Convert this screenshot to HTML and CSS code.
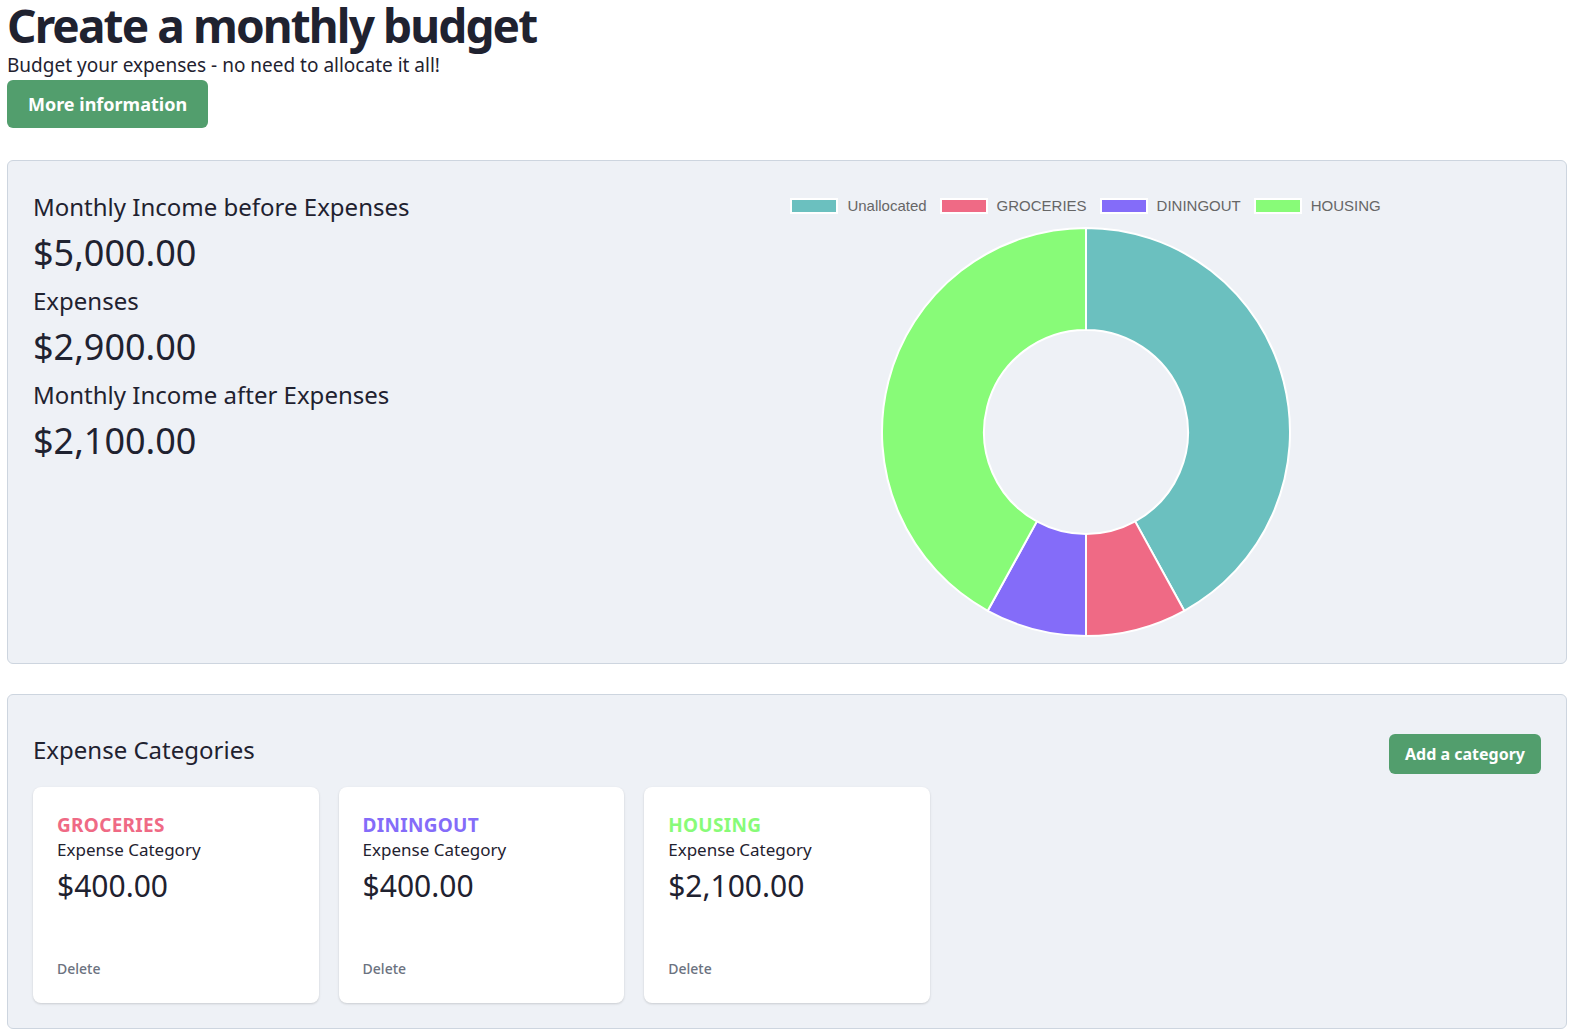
FILE: index.html
```html
<!DOCTYPE html>
<html lang="en">
<head>
<meta charset="utf-8">
<title>Create a monthly budget</title>
<link rel="stylesheet" href="styles.css">
</head>
<body>
<div class="page">
  <header class="intro">
    <h1 class="title">Create a monthly budget</h1>
    <p class="subtitle">Budget your expenses - no need to allocate it all!</p>
    <button class="btn btn-lg">More information</button>
  </header>

  <section class="panel summary">
    <div class="stats">
      <div class="label">Monthly Income before Expenses</div>
      <div class="amount">$5,000.00</div>
      <div class="label">Expenses</div>
      <div class="amount">$2,900.00</div>
      <div class="label">Monthly Income after Expenses</div>
      <div class="amount">$2,100.00</div>
    </div>
    <div class="chart">
      <div class="legend">
        <div class="legend-item"><span class="swatch sw-teal"></span><span>Unallocated</span></div>
        <div class="legend-item"><span class="swatch sw-pink"></span><span>GROCERIES</span></div>
        <div class="legend-item"><span class="swatch sw-purple"></span><span>DININGOUT</span></div>
        <div class="legend-item"><span class="swatch sw-green"></span><span>HOUSING</span></div>
      </div>
      <svg class="donut" width="412" height="412" viewBox="0 0 412 412">
        <g stroke="#ffffff" stroke-width="2" stroke-linejoin="round">
          <path fill="#6bc0bf" d="M206 2 A204 204 0 0 1 304.29 384.76 L255.14 295.38 A102 102 0 0 0 206 104 Z"/>
          <path fill="#ef6a85" d="M304.29 384.76 A204 204 0 0 1 206 410 L206 308 A102 102 0 0 0 255.14 295.38 Z"/>
          <path fill="#846cf9" d="M206 410 A204 204 0 0 1 107.71 384.76 L156.86 295.38 A102 102 0 0 0 206 308 Z"/>
          <path fill="#88fb78" d="M107.71 384.76 A204 204 0 0 1 206 2 L206 104 A102 102 0 0 0 156.86 295.38 Z"/>
        </g>
      </svg>
    </div>
  </section>

  <section class="panel categories">
    <div class="cat-header">
      <h2 class="cat-heading">Expense Categories</h2>
      <button class="btn btn-md">Add a category</button>
    </div>
    <div class="cat-grid">
      <div class="cat-card">
        <div class="cat-name c-pink">GROCERIES</div>
        <div class="cat-type">Expense Category</div>
        <div class="cat-amount">$400.00</div>
        <div class="cat-delete">Delete</div>
      </div>
      <div class="cat-card">
        <div class="cat-name c-purple">DININGOUT</div>
        <div class="cat-type">Expense Category</div>
        <div class="cat-amount">$400.00</div>
        <div class="cat-delete">Delete</div>
      </div>
      <div class="cat-card">
        <div class="cat-name c-green">HOUSING</div>
        <div class="cat-type">Expense Category</div>
        <div class="cat-amount">$2,100.00</div>
        <div class="cat-delete">Delete</div>
      </div>
    </div>
  </section>
</div>
</body>
</html>
```

FILE: styles.css
```css
* { box-sizing: border-box; }

body {
  margin: 0;
  background: #ffffff;
  color: #1f2230;
  font-family: "Noto Sans", "Open Sans", sans-serif;
}

.page {
  padding: 0 10px 0 7px;
}

.intro {
  padding-top: 2px;
}

.title {
  margin: 0;
  font-size: 46px;
  line-height: 46px;
  font-weight: 700;
  letter-spacing: -1.9px;
}

.subtitle {
  margin: 3px 0 0;
  font-size: 19px;
  line-height: 28px;
}

.btn {
  display: inline-flex;
  align-items: center;
  justify-content: center;
  border: 0;
  border-radius: 6px;
  background: #529e6d;
  color: #ffffff;
  font-family: "Noto Sans", "Open Sans", sans-serif;
  font-weight: 700;
  cursor: pointer;
}

.btn-lg {
  margin-top: 1px;
  height: 48px;
  width: 201px;
  padding: 0;
  font-size: 18px;
}

.btn-md {
  height: 40px;
  width: 152px;
  padding: 0;
  font-size: 16px;
  margin-top: 1px;
}

.panel {
  margin-top: 32px;
  background: #eef1f6;
  border: 1px solid #cdd5df;
  border-radius: 6px;
  padding: 25px 25px 25px;
}

.summary {
  display: grid;
  grid-template-columns: 2fr 3fr;
  padding-bottom: 25px;
}

.stats {
  padding-top: 5px;
}

.label {
  font-size: 24px;
  line-height: 32px;
  margin-bottom: 10px;
}

.amount {
  font-size: 36px;
  line-height: 40px;
  margin-bottom: 12px;
}

.chart {
  display: flex;
  flex-direction: column;
  align-items: center;
  padding-right: 6px;
}

.legend {
  display: flex;
  gap: 13px;
  padding: 12px 0 12px;
  font-family: "Liberation Sans", Arial, sans-serif;
  font-size: 15px;
  line-height: 16px;
  color: #666666;
}

.legend-item {
  display: flex;
  align-items: center;
  gap: 9px;
}

.swatch {
  display: block;
  width: 48px;
  height: 16px;
  border: 2px solid #ffffff;
}

.sw-teal { background: #6bc0bf; }
.sw-pink { background: #ef6a85; }
.sw-purple { background: #846cf9; }
.sw-green { background: #88fb78; }

.donut {
  display: block;
}

.categories {
  margin-top: 30px;
}

.cat-header {
  display: flex;
  justify-content: space-between;
  align-items: flex-start;
  padding-top: 13px;
}

.cat-heading {
  margin: 1px 0 0;
  font-size: 24px;
  line-height: 32px;
  font-weight: 400;
}

.cat-grid {
  display: grid;
  grid-template-columns: repeat(5, 1fr);
  gap: 20px;
  margin-top: 13px;
}

.cat-card {
  display: flex;
  flex-direction: column;
  min-height: 216px;
  background: #ffffff;
  border-radius: 8px;
  box-shadow: 0 1px 3px rgba(0, 0, 0, 0.1), 0 1px 2px rgba(0, 0, 0, 0.06);
  padding: 26px 24px 24px;
}

.cat-name {
  font-size: 19px;
  line-height: 24px;
  font-weight: 700;
  letter-spacing: 0.3px;
}

.c-pink { color: #ef6a85; }
.c-purple { color: #846cf9; }
.c-green { color: #88fb78; }

.cat-type {
  margin-top: 1px;
  font-size: 17px;
  line-height: 24px;
}

.cat-amount {
  margin-top: 6px;
  font-size: 30px;
  line-height: 36px;
}

.cat-delete {
  margin-top: auto;
  font-size: 14px;
  line-height: 20px;
  font-weight: 500;
  color: #6b7280;
}
```
